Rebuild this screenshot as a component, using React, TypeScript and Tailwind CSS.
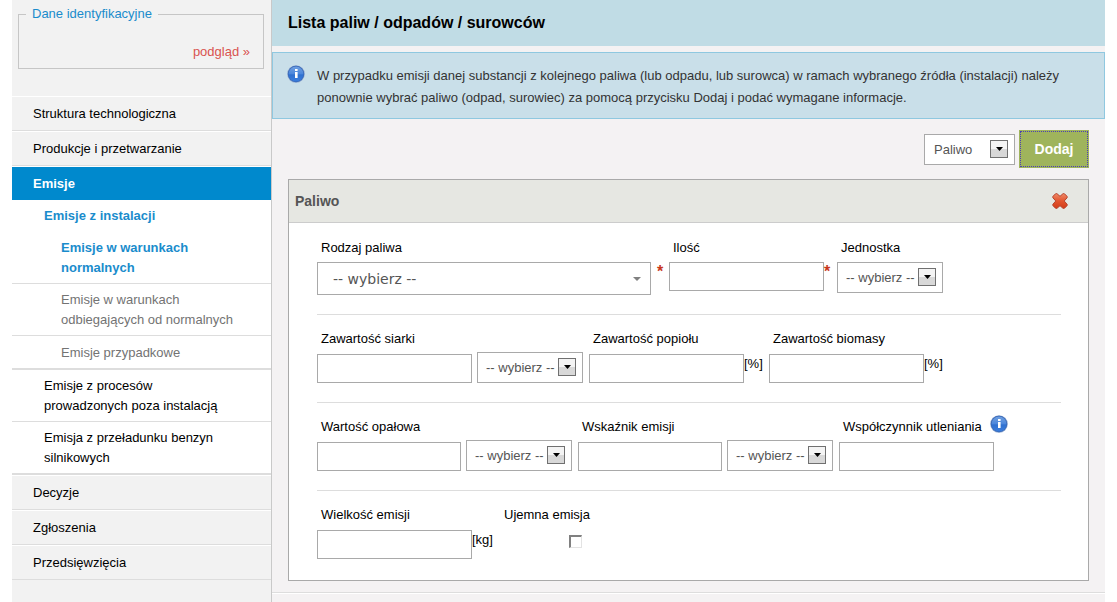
import { useId, type ReactNode } from 'react';

type SubItem = { label: string; children?: string[] };
type MenuItem = { label: string; items?: SubItem[] };

const menu: MenuItem[] = [
  { label: 'Struktura technologiczna' },
  { label: 'Produkcje i przetwarzanie' },
  {
    label: 'Emisje',
    items: [
      {
        label: 'Emisje z instalacji',
        children: [
          'Emisje w warunkach normalnych',
          'Emisje w warunkach odbiegających od normalnych',
          'Emisje przypadkowe',
        ],
      },
      { label: 'Emisje z procesów prowadzonych poza instalacją' },
      { label: 'Emisja z przeładunku benzyn silnikowych' },
    ],
  },
  { label: 'Decyzje' },
  { label: 'Zgłoszenia' },
  { label: 'Przedsięwzięcia' },
];

function InfoIcon({ className = '' }: { className?: string }) {
  const id = useId();
  return (
    <svg viewBox="0 0 18 18" className={`h-[18px] w-[18px] shrink-0 ${className}`} aria-hidden="true">
      <defs>
        <linearGradient id={id} x1="0" y1="0" x2="0" y2="1">
          <stop offset="0" stopColor="#6f9fe0" />
          <stop offset="0.5" stopColor="#4a86dc" />
          <stop offset="0.55" stopColor="#2f70d0" />
          <stop offset="1" stopColor="#3a7ddc" />
        </linearGradient>
      </defs>
      <circle cx="9" cy="9" r="8.8" fill="#8fa9d0" />
      <circle cx="9" cy="9" r="8.2" fill="#3565b5" />
      <circle cx="9" cy="9" r="7.5" fill={`url(#${id})`} />
      <rect x="8" y="4" width="2.600" height="2" fill="#fff" />
      <rect x="8" y="7" width="2.600" height="6" fill="#fff" />
    </svg>
  );
}

function DeleteIcon() {
  const id = useId();
  return (
    <svg viewBox="0 0 16 16" className="h-4 w-4" aria-hidden="true">
      <defs>
        <linearGradient id={id} x1="0" y1="0" x2="0" y2="1">
          <stop offset="0" stopColor="#f08a68" />
          <stop offset="0.5" stopColor="#e2552f" />
          <stop offset="1" stopColor="#d23a18" />
        </linearGradient>
      </defs>
      <path
        d="M3.500.8 1 3.300q-.6.800 0 1.600L3.800 8 1 11.100q-.6.800 0 1.600l2.500 2.500q.8.600 1.600 0L8 12.700l2.900 2.500q.8.600 1.600 0l2.500-2.500q.6-.8 0-1.600L12.200 8 15 4.900q.6-.8 0-1.600L12.500.8q-.8-.6-1.600 0L8 3.300 5.100.8Q4.300.2 3.500.8z"
        fill={`url(#${id})`}
        stroke="#b5452f"
        strokeWidth="1"
        strokeLinejoin="round"
      />
    </svg>
  );
}

function Select({
  label,
  value,
  className,
  padding = 'pl-2',
}: {
  label: string;
  value: string;
  className: string;
  padding?: string;
}) {
  return (
    <span className={`relative block ${className}`}>
      <select
        aria-label={label}
        className={`block h-[31px] w-full appearance-none border border-[#a9a9a9] bg-white text-[13px] text-[#555] ${padding}`}
      >
        <option>{value}</option>
      </select>
      <span className="pointer-events-none absolute right-[7px] top-1.5 flex h-[18px] w-[18px] items-center justify-center border border-[#707070] bg-linear-to-b from-[#f4f4f4] from-50% to-[#d8d8d8] to-50%">
        <svg viewBox="0 0 7 4" className="h-1 w-[7px]" aria-hidden="true">
          <path d="M0 0h7L3.500 4z" fill="#000" />
        </svg>
      </span>
    </span>
  );
}

function Field({
  label,
  narrow = false,
  unit,
  unitClass = '',
  info = false,
}: {
  label: string;
  narrow?: boolean;
  unit?: string;
  unitClass?: string;
  info?: boolean;
}) {
  const id = useId();
  return (
    <div className="flex flex-col">
      <span className="flex h-5 items-center gap-2 whitespace-nowrap pl-1">
        <label htmlFor={id}>{label}</label>
        {info && <InfoIcon className="-mt-1.5" />}
      </span>
      <span className="flex pt-[5px]">
        <input
          id={id}
          type="text"
          className={`h-[29px] border border-[#a9a9a9] bg-white px-2 ${narrow ? 'w-36' : 'w-[155px]'}`}
        />
        {unit && <span className={`leading-5 ${unitClass}`}>{unit}</span>}
      </span>
    </div>
  );
}

function Star({ className }: { className: string }) {
  return (
    <span className={`text-base font-bold leading-5 text-[#c8371b] ${className}`} aria-hidden="true">
      *
    </span>
  );
}

function Row({ children }: { children: ReactNode }) {
  return <div className="flex items-end gap-[5px] border-b border-[#ddd] pb-[19px] pt-3.5">{children}</div>;
}

function Sidebar() {
  return (
    <aside className="w-[260px] shrink-0 border-r border-[#c9c9c9] bg-[#f2f2f2]">
      <div className="pb-[27px] pl-1.5 pr-[7px] pt-1">
        <fieldset className="h-[65px] border border-[#c6c6c6] px-[7px] pb-2">
          <legend className="px-1.5 leading-5 text-[#1a8ccc]">Dane identyfikacyjne</legend>
          <a href="#podglad" className="mt-[18px] block pr-1.5 text-right leading-5 text-[#d9534f]">
            podgląd »
          </a>
        </fieldset>
      </div>
      <nav>
        <ul>
          {menu.map((item) => (
            <li key={item.label}>
              <a
                href="#"
                className={
                  item.items
                    ? 'flex h-[34px] items-center border-t border-white bg-[#0089cd] pl-[21px] font-bold text-white'
                    : 'flex h-[35px] items-center border-b border-t border-b-[#ddd] border-t-white pl-[21px]'
                }
              >
                {item.label}
              </a>
              {item.items && (
                <ul className="border-b border-[#ddd] bg-white">
                  {item.items.map((sub) => (
                    <li key={sub.label} className="border-b border-[#ddd]">
                      <a
                        href="#"
                        className={
                          sub.children
                            ? 'block py-1.5 pl-8 pr-10 font-bold leading-5 text-[#1a8ccc]'
                            : 'block pb-[5px] pl-8 pr-10 pt-1.5 leading-5'
                        }
                      >
                        {sub.label}
                      </a>
                      {sub.children && (
                        <ul>
                          {sub.children.map((child, i) => (
                            <li key={child} className="border-b border-[#ddd] last:pt-px">
                              <a
                                href="#"
                                className={
                                  i === 0
                                    ? 'block pb-[5px] pl-[49px] pr-9 pt-1.5 font-bold leading-5 text-[#1a8ccc]'
                                    : 'block pb-[5px] pl-[49px] pr-9 pt-1.5 leading-5 text-[#737373]'
                                }
                              >
                                {child}
                              </a>
                            </li>
                          ))}
                        </ul>
                      )}
                    </li>
                  ))}
                </ul>
              )}
            </li>
          ))}
        </ul>
      </nav>
    </aside>
  );
}

function FuelCard() {
  return (
    <section className="border border-[#a9a9a9] bg-white">
      <header className="flex h-[43px] items-center justify-between border-b border-[#ccc] bg-[#e6e7e2] pl-1.5 pr-5">
        <h2 className="text-sm font-bold text-[#555]">Paliwo</h2>
        <button type="button" aria-label="Usuń">
          <DeleteIcon />
        </button>
      </header>
      <div className="pb-0.5 pl-7 pr-[27px]">
        <div className="flex border-b border-[#ddd] pb-[19px] pt-[15px]">
          <div>
            <label htmlFor="fuel-kind" className="block pl-1 leading-5">
              Rodzaj paliwa
            </label>
            <span className="relative mt-1 block w-[334px]">
              <select
                id="fuel-kind"
                className="block h-[33px] w-full appearance-none border border-[#a9a9a9] bg-white pl-[15px] font-['DejaVu_Sans',sans-serif] text-sm text-[#555]"
              >
                <option>-- wybierz --</option>
              </select>
              <svg
                viewBox="0 0 8 4"
                className="pointer-events-none absolute right-2.5 top-[15px] h-1 w-2"
                aria-hidden="true"
              >
                <path d="M0 0h8L4 4z" fill="#808080" />
              </svg>
            </span>
          </div>
          <Star className="w-[18px] pt-6 text-center" />
          <div>
            <label htmlFor="amount" className="block pl-1 leading-5">
              Ilość
            </label>
            <input
              id="amount"
              type="text"
              className="mt-1 block h-[29px] w-[155px] border border-[#a9a9a9] bg-white px-2"
            />
          </div>
          <Star className="w-[13px] pt-6" />
          <div>
            <span className="mb-1 block pl-1 leading-5">Jednostka</span>
            <Select label="Jednostka" value="-- wybierz --" className="w-[106px]" />
          </div>
        </div>
        <Row>
          <Field label="Zawartość siarki" />
          <Select label="Jednostka zawartości siarki" value="-- wybierz --" className="mr-px w-[106px]" />
          <Field label="Zawartość popiołu" unit="[%]" unitClass="w-5" />
          <Field label="Zawartość biomasy" unit="[%]" />
        </Row>
        <Row>
          <Field label="Wartość opałowa" narrow />
          <Select label="Jednostka wartości opałowej" value="-- wybierz --" className="mr-px w-[106px]" />
          <Field label="Wskaźnik emisji" narrow />
          <Select label="Jednostka wskaźnika emisji" value="-- wybierz --" className="mr-px w-[106px]" />
          <Field label="Współczynnik utleniania" info />
        </Row>
        <div className="flex gap-[5px] pb-[19px] pt-3.5">
          <Field label="Wielkość emisji" unit="[kg]" unitClass="w-[23px]" />
          <div>
            <label htmlFor="negative" className="block pl-1 leading-5">
              Ujemna emisja
            </label>
            <input
              id="negative"
              type="checkbox"
              className="ml-[69px] mt-2.5 block h-[13px] w-[13px] appearance-none border-2 border-b border-r border-b-[#e3e3e3] border-l-[#808080] border-r-[#e3e3e3] border-t-[#808080] bg-white"
            />
          </div>
        </div>
      </div>
    </section>
  );
}

export default function App() {
  return (
    <div className="flex min-h-screen bg-white px-3 font-['Liberation_Sans',Arial,sans-serif] text-[13px] text-black">
      <Sidebar />
      <main className="min-w-0 flex-1 bg-[#f4f2f3]">
        <h1 className="flex h-[46px] items-center bg-[#c0dce5] pl-4 text-base font-bold">
          Lista paliw / odpadów / surowców
        </h1>
        <div className="mt-1.5 flex gap-3 border border-[#8fc8e0] bg-[#c9dfe9] pb-[9px] pl-3.5 pr-8 pt-3">
          <InfoIcon />
          <p className="leading-[22px] text-[#333]">
            W przypadku emisji danej substancji z kolejnego paliwa (lub odpadu, lub surowca) w ramach wybranego źródła
            (instalacji) należy ponownie wybrać paliwo (odpad, surowiec) za pomocą przycisku Dodaj i podać wymagane
            informacje.
          </p>
        </div>
        <div className="px-4 pb-[11px]">
          <div className="flex items-start justify-end gap-1 pb-[11px] pt-[11px]">
            <Select label="Rodzaj wpisu" value="Paliwo" className="mt-1 w-[91px]" padding="pl-[9px]" />
            <button
              type="button"
              className="h-[38px] w-[70px] bg-[#9fb45c] text-sm font-bold text-white outline-1 -outline-offset-2 outline-dotted outline-[#4b3fb5]"
            >
              Dodaj
            </button>
          </div>
          <FuelCard />
        </div>
        <div className="border-b border-t border-b-white border-t-[#ddd]" />
      </main>
    </div>
  );
}
